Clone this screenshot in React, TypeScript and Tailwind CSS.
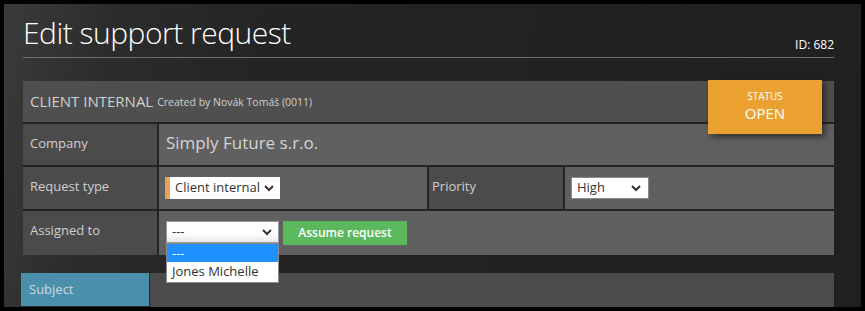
import { useState } from 'react'

const font = { fontFamily: '"Open Sans", "Noto Sans", sans-serif' }

function Chevron() {
  return (
    <svg width="12" height="8" viewBox="0 0 12 8" className="shrink-0">
      <polyline points="2,2 6,6 10,2" fill="none" stroke="#333" strokeWidth="2" />
    </svg>
  )
}

export default function App() {
  const [open] = useState(true)

  return (
    <div className="w-[865px] h-[311px] bg-black p-[4px]" style={font}>
      <div className="relative h-full overflow-hidden bg-[linear-gradient(100deg,#3b3b3b_0%,#2c2c2c_12%,#242424_30%,#202020_100%)] pl-[19px] pr-[27px]">
        {/* Header */}
        <div className="flex items-end justify-between border-b border-[#6e6e6e] pt-[10px] pb-[5px]">
          <h1 className="text-[30px] font-light leading-[38px] text-white tracking-[-0.5px]">Edit support request</h1>
          <span className="text-[12px] leading-[14px] text-white">ID: 682</span>
        </div>

        {/* Panel */}
        <div className="relative mt-[23px] flex flex-col gap-[2px] bg-[#232323]">
          <div className="h-[41px] bg-[#4f4f4f] px-[7px] flex items-center text-[#d0d0d0]">
            <span className="text-[15px] leading-none">CLIENT INTERNAL</span>
            <span className="ml-[4px] text-[10.5px] leading-none mt-[2px]">Created by Novák Tomáš (0011)</span>
          </div>

          <div className="absolute right-[12px] top-[-1px] z-10 w-[114px] h-[54px] bg-[#eba12f] shadow-[3px_3px_6px_rgba(0,0,0,0.5)] flex flex-col items-center justify-center text-white">
            <span className="text-[10px] leading-[12px]">STATUS</span>
            <span className="text-[15px] leading-[22px]">OPEN</span>
          </div>

          <div className="grid grid-cols-[134px_1fr] gap-[2px] h-[41px]">
            <div className="bg-[#4b4b4b] pl-[7px] pt-[11px] text-[13px] leading-[16px] text-[#cfcfcf]">Company</div>
            <div className="bg-[#606060] pl-[7px] pt-[8px] text-[17px] leading-[22px] text-[#d4d4d4]">Simply Future s.r.o.</div>
          </div>

          <div className="grid grid-cols-[134px_268px_134px_1fr] gap-[2px] h-[42px]">
            <div className="bg-[#4b4b4b] pl-[7px] pt-[11px] text-[13px] leading-[16px] text-[#cfcfcf]">Request type</div>
            <div className="bg-[#606060] pl-[6px] pt-[10px]">
              <div className="w-[115px] h-[22px] bg-white border-l-[5px] border-[#e9a15e] flex items-center justify-between pl-[5px] pr-[5px] text-[13px] text-[#333]">
                <span>Client internal</span>
                <Chevron />
              </div>
            </div>
            <div className="bg-[#4b4b4b] pl-[3px] pt-[11px] text-[13px] leading-[16px] text-[#cfcfcf]">Priority</div>
            <div className="bg-[#606060] pl-[6px] pt-[10px]">
              <div className="w-[78px] h-[22px] bg-white border border-[#8a8a8a] flex items-center justify-between pl-[5px] pr-[6px] text-[13px] text-[#333]">
                <span>High</span>
                <Chevron />
              </div>
            </div>
          </div>

          <div className="grid grid-cols-[134px_1fr] gap-[2px] h-[44px]">
            <div className="bg-[#4b4b4b] pl-[7px] pt-[11px] text-[13px] leading-[16px] text-[#cfcfcf]">Assigned to</div>
            <div className="bg-[#606060] pl-[7px] pt-[10px] flex items-start gap-[4px]">
              <div className="relative">
                <div className="w-[113px] h-[22px] bg-[linear-gradient(#fff_60%,#e6e6e6)] border border-[#9a9a9a] flex items-center justify-between pl-[5px] pr-[5px] text-[13px] text-[#333]">
                  <span>---</span>
                  <Chevron />
                </div>
                {open && (
                  <div className="absolute left-0 top-[22px] z-20 w-[113px] bg-white border border-[#8a8a8a] text-[13px] leading-[18px] text-[#333]">
                    <div className="bg-[#1e90ff] text-white pl-[5px]">---</div>
                    <div className="pl-[5px] h-[20px]">Jones Michelle</div>
                  </div>
                )}
              </div>
              <button className="w-[124px] h-[24px] bg-[#5cb85c] text-white text-[12px] font-semibold">Assume request</button>
            </div>
          </div>
        </div>

        {/* Subject row */}
        <div className="mt-[18px] flex h-[34px] bg-[#4b4b4b] -ml-[2px]">
          <div className="w-[129px] bg-[#4a8fab] border-r border-b border-[#2a2a2a] pl-[8px] pt-[8px] text-[13px] leading-[16px] text-[#cfd8dc]">Subject</div>
        </div>
      </div>
    </div>
  )
}
